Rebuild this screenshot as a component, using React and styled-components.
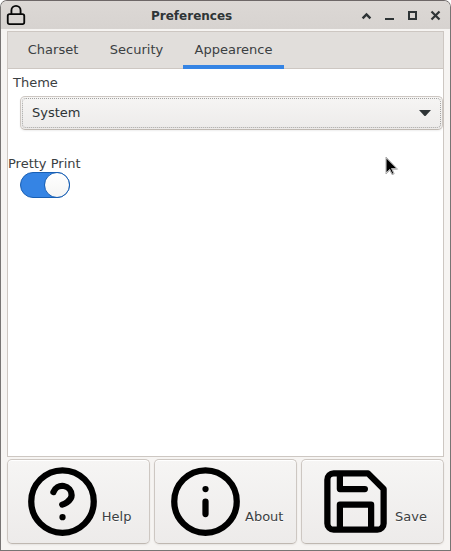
import React from "react";
import styled, { createGlobalStyle } from "styled-components";

const GlobalStyle = createGlobalStyle`
  * { box-sizing: border-box; }
  body { margin: 0; background: #fff; }
`;

const Window = styled.main`
  position: relative;
  display: flex;
  flex-direction: column;
  width: 451px;
  height: 551px;
  overflow: hidden;
  border: 1px solid #777473;
  border-top-color: #6d6767;
  border-radius: 7px 7px 0 0;
  background: #f6f4f2;
  color: #2e3436;
  font: 13px/16px "DejaVu Sans", sans-serif;
`;

const TitleBar = styled.header`
  display: flex;
  align-items: center;
  height: 28px;
  flex: none;
  padding: 0 8px 0 4px;
  background: linear-gradient(#dcd8d5, #d7d3d0);
`;

const LockIcon = styled.svg`
  width: 22px;
  height: 22px;
`;

const Title = styled.h1`
  flex: 1;
  margin: 1px 0 0 124px;
  font-size: 12px;
  line-height: 16px;
  font-weight: bold;
`;

const Controls = styled.div`
  display: flex;
  gap: 9px;
`;

const ControlButton = styled.button`
  width: 14px;
  height: 14px;
  padding: 0;
  border: 0;
  background: none;
  color: #2e3436;

  svg { display: block; }
`;

const Notebook = styled.section`
  width: 437px;
  height: 426px;
  flex: none;
  margin: 2px 0 0 6px;
  border: 1px solid #cdc7c2;
  background: #fff;
`;

const TabList = styled.nav`
  display: flex;
  gap: 8px;
  height: 37px;
  padding-left: 8px;
  background: #e1dedb;
  box-shadow: inset 0 -1px #cdc7c2;
`;

const Tab = styled.button`
  width: ${({ $width }) => $width}px;
  padding: 0 0 2px;
  border: 0;
  background: none;
  color: #3b4042;
  font: inherit;
  box-shadow: ${({ $active }) => ($active ? "inset 0 -4px #3584e4" : "none")};
`;

const Label = styled.div`
  height: 16px;
  margin: ${({ $margin }) => $margin};
  color: #3b4042;
`;

const Select = styled.button`
  display: flex;
  align-items: center;
  justify-content: space-between;
  width: 423px;
  height: 34px;
  margin: 5px 0 0 12px;
  padding: 1px;
  border: 1px solid #cdc7c2;
  border-bottom-color: #bfb8b1;
  border-radius: 5px;
  background: linear-gradient(#f6f5f4, #edebea);
  box-shadow: 0 1px 2px rgba(0, 0, 0, 0.07);
  color: #2e3436;
  font: inherit;
`;

const FocusRing = styled.span`
  display: flex;
  align-items: center;
  justify-content: space-between;
  width: 100%;
  height: 30px;
  padding: 0 8px 0 9px;
  border: 1px dotted #a3a3a1;
  border-radius: 4px;
`;

const SwitchTrack = styled.button`
  display: flex;
  justify-content: flex-end;
  width: 50px;
  height: 26px;
  margin: 0 0 0 12px;
  padding: 0;
  border: 1px solid #185fb4;
  border-radius: 13px;
  background: #3584e4;
`;

const SwitchKnob = styled.span`
  width: 26px;
  height: 26px;
  flex: none;
  margin: -1px -1px 0 0;
  border: 1px solid #185fb4;
  border-radius: 50%;
  background: linear-gradient(#fff, #f5f5f4);
`;

const Actions = styled.footer`
  display: grid;
  grid-template-columns: repeat(3, 143px);
  gap: 4px;
  margin: 2px 0 0 6px;
`;

const ActionButton = styled.button`
  display: flex;
  align-items: flex-start;
  height: 85px;
  padding: 4px 0 0 ${({ $inset }) => $inset}px;
  border: 1px solid #cdc7c2;
  border-bottom-color: #bfb8b1;
  border-radius: 5px;
  background: linear-gradient(#f6f5f4, #edebea);
  box-shadow: 0 1px 2px rgba(0, 0, 0, 0.07), inset 0 1px #fff;
  color: #3b4042;
  font: inherit;
  white-space: nowrap;
`;

const ActionIcon = styled.svg`
  width: 75px;
  height: 75px;
  flex: none;
  color: #000;
`;

const ActionLabel = styled.span`
  margin: 45px 0 0 2px;
  text-shadow: 0 1px rgba(255, 255, 255, 0.75);
`;

const Pointer = styled.svg`
  position: absolute;
  left: 383px;
  top: 154px;
  pointer-events: none;
`;

const strokes = {
  viewBox: "0 0 24 24",
  fill: "none",
  stroke: "currentColor",
  strokeWidth: 2,
  strokeLinecap: "round",
  strokeLinejoin: "round",
};

const tabs = [
  { name: "Charset", width: 74 },
  { name: "Security", width: 77 },
  { name: "Appearence", width: 101, active: true },
];

const actions = [
  {
    name: "Help",
    inset: 16.8,
    icon: (
      <>
        <circle cx="12" cy="12" r="10" />
        <path d="M9.09 9a3 3 0 0 1 5.83 1c0 2-3 3-3 3M12 17h.01" />
      </>
    ),
  },
  {
    name: "About",
    inset: 13,
    icon: (
      <>
        <circle cx="12" cy="12" r="10" />
        <path d="M12 16v-4M12 8h.01" />
      </>
    ),
  },
  {
    name: "Save",
    inset: 16,
    icon: (
      <path d="M19 21H5a2 2 0 0 1-2-2V5a2 2 0 0 1 2-2h11l5 5v11a2 2 0 0 1-2 2zM17 21v-8H7v8M7 3v5h8" />
    ),
  },
];

const controls = [
  { name: "Shade", icon: <path d="m3.6 10.3 3.9-3.9 3.9 3.9" strokeWidth="2.4" /> },
  { name: "Minimize", icon: <path d="M3 11h9" strokeWidth="2" /> },
  { name: "Maximize", icon: <path d="M4 4h7v7H4z" strokeWidth="2" /> },
  { name: "Close", icon: <path d="m3.5 3.5 8 8m0-8-8 8" strokeWidth="2.2" /> },
];

export default function App() {
  return (
    <>
      <GlobalStyle />
      <Window>
        <TitleBar>
          <LockIcon {...strokes} stroke="#080808">
            <rect x="3" y="11" width="18" height="11" rx="2" />
            <path d="M7 11V7a5 5 0 0 1 10 0v4" />
          </LockIcon>
          <Title>Preferences</Title>
          <Controls>
            {controls.map(({ name, icon }) => (
              <ControlButton key={name} aria-label={name}>
                <svg width="14" height="14" fill="none" stroke="currentColor">{icon}</svg>
              </ControlButton>
            ))}
          </Controls>
        </TitleBar>
        <Notebook>
          <TabList>
            {tabs.map(({ name, width, active }) => (
              <Tab key={name} $width={width} $active={active}>{name}</Tab>
            ))}
          </TabList>
          <Label $margin="6px 0 0 5px">Theme</Label>
          <Select aria-label="Theme">
            <FocusRing>
              <span>System</span>
              <svg width="14" height="8"><path d="M1 1h12L7.5 7h-1z" fill="#2e3436" /></svg>
            </FocusRing>
          </Select>
          <Label $margin="26px 0 0">Pretty Print</Label>
          <SwitchTrack role="switch" aria-checked="true" aria-label="Pretty Print">
            <SwitchKnob />
          </SwitchTrack>
        </Notebook>
        <Actions>
          {actions.map(({ name, inset, icon }) => (
            <ActionButton key={name} $inset={inset}>
              <ActionIcon {...strokes}>{icon}</ActionIcon>
              <ActionLabel>{name}</ActionLabel>
            </ActionButton>
          ))}
        </Actions>
        <Pointer width="17" height="23" aria-hidden="true">
          <path d="M2 2v17l3.8-3.7 2.3 4.4 2.1-.9-2-4.6H13.5z" fill="#fff" stroke="#a9a9a9" strokeWidth="1" />
          <path d="M2.5 3.5v13.7l3.4-3.3 2.5 4.8.9-.5-2.2-5h5z" fill="#000" />
        </Pointer>
      </Window>
    </>
  );
}
